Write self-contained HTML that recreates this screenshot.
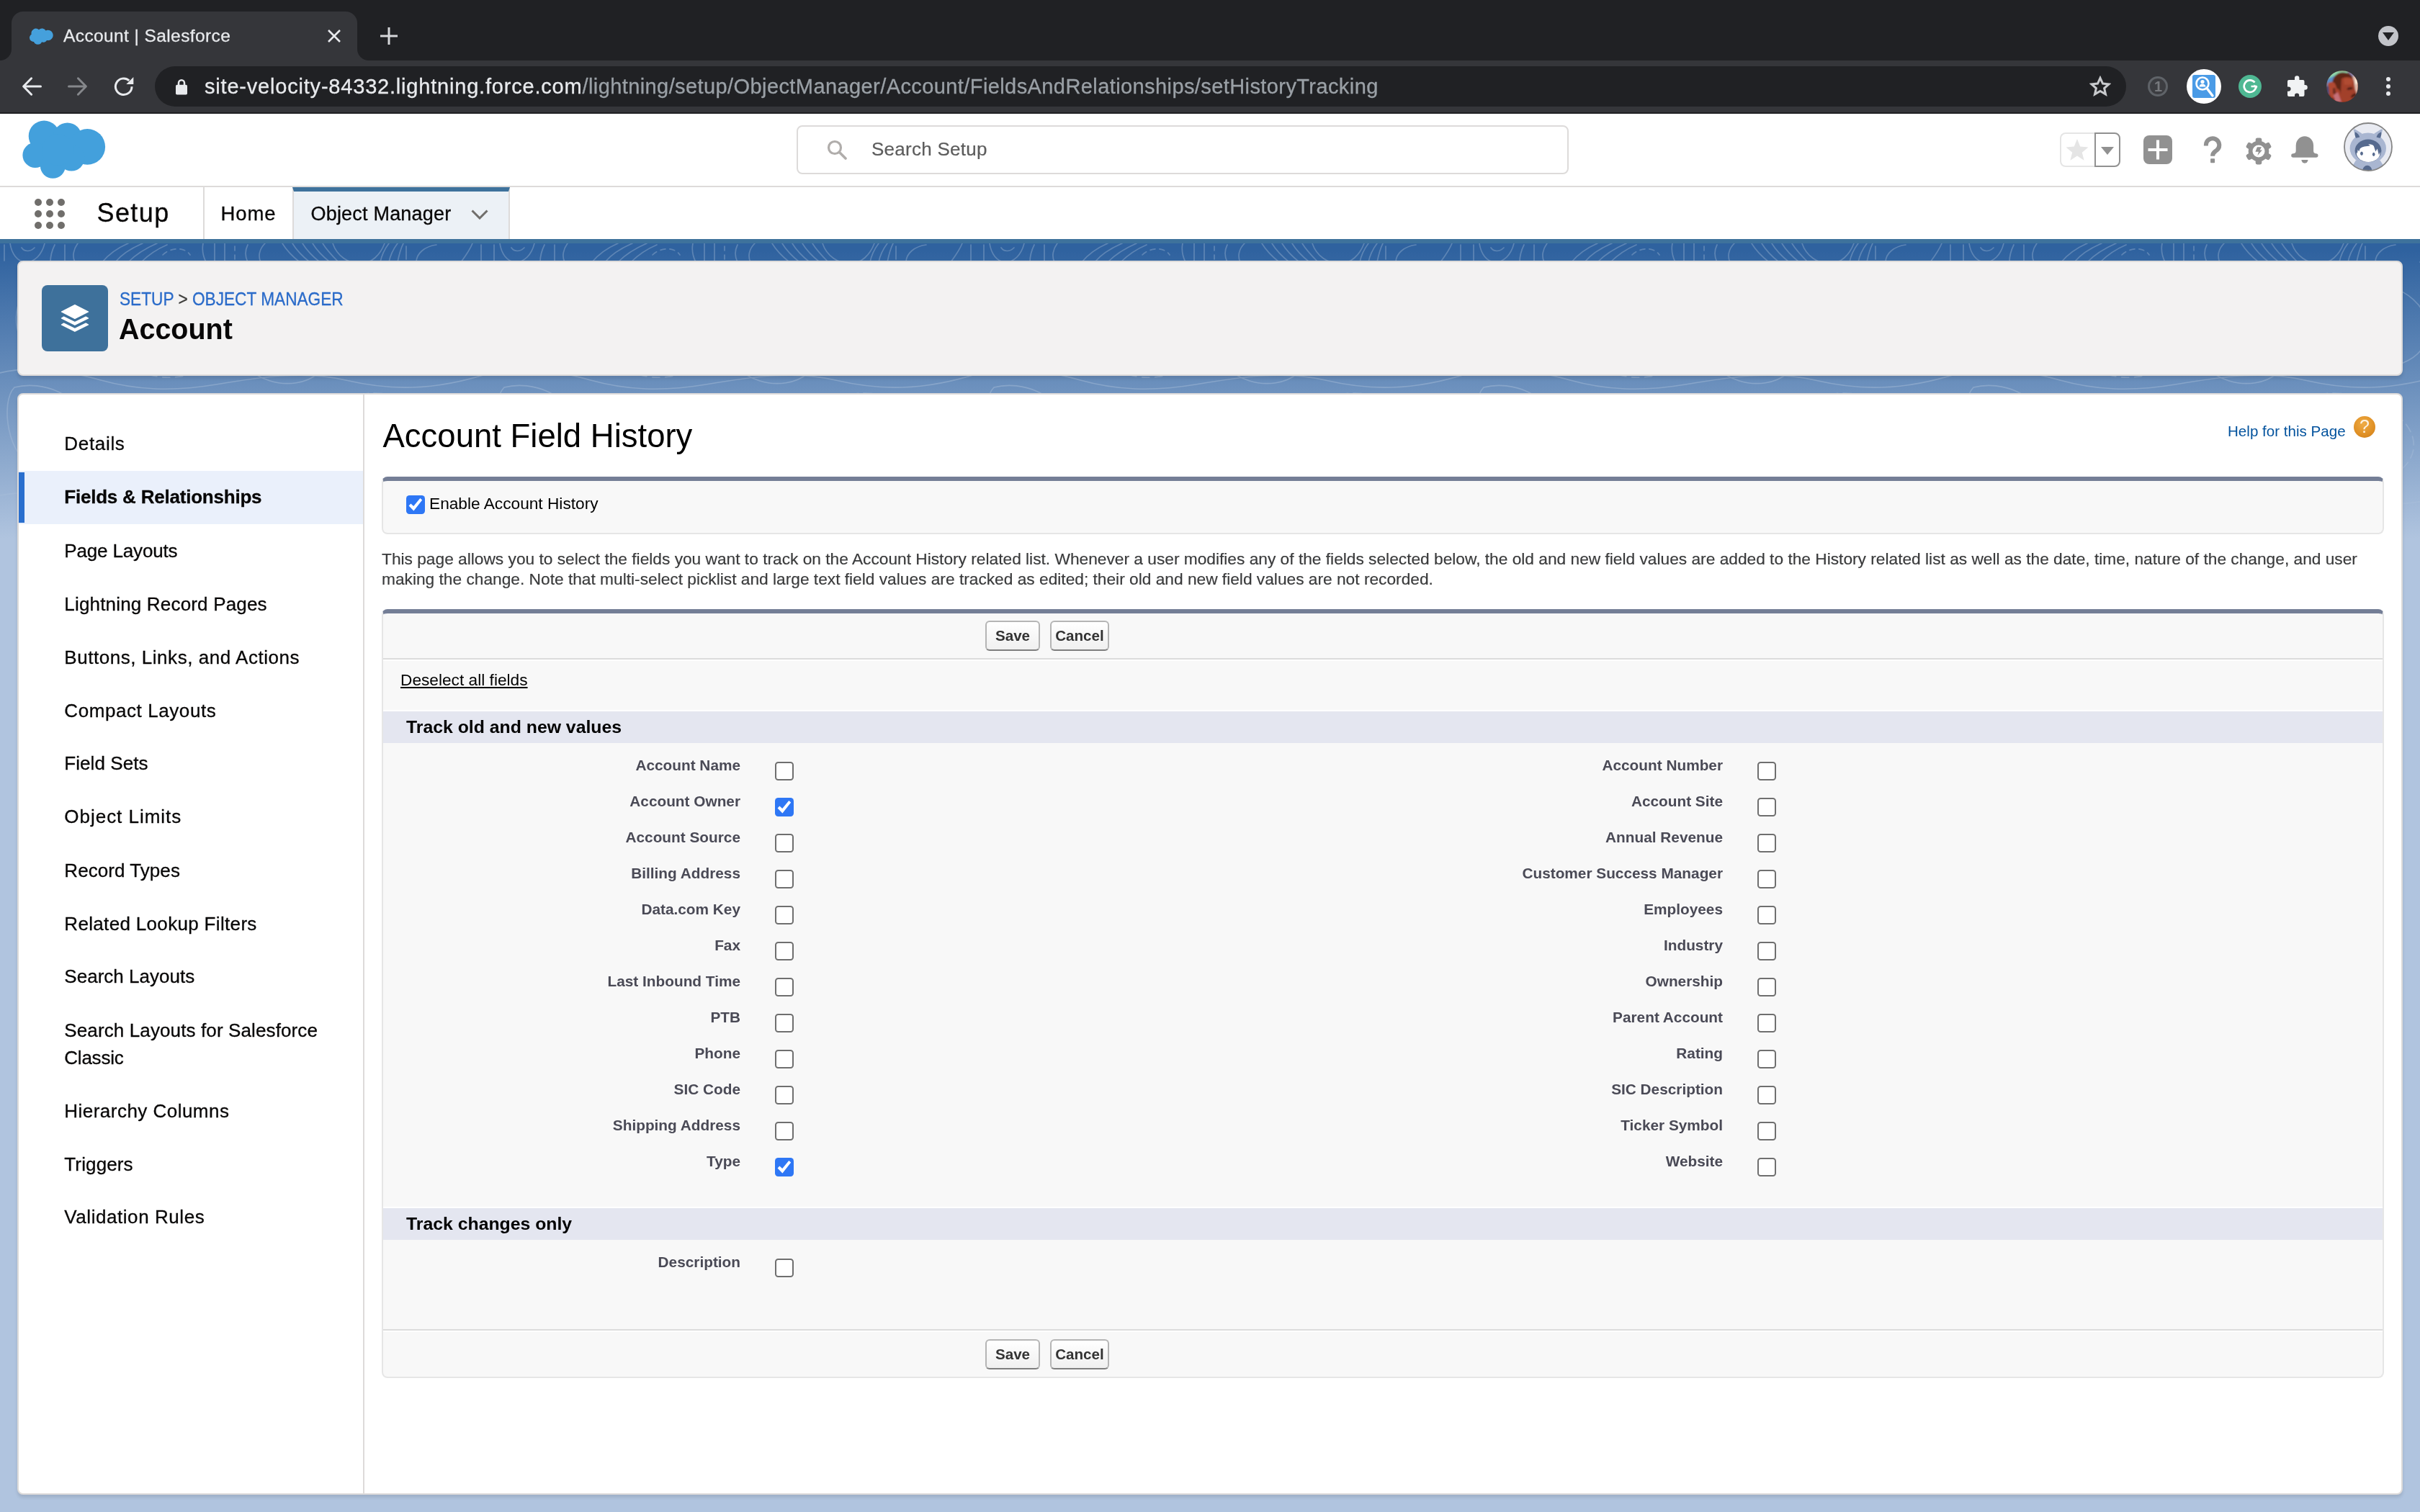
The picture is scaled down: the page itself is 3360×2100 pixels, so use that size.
<!DOCTYPE html>
<html lang="en">
<head>
<meta charset="utf-8">
<title>Account | Salesforce</title>
<style>
*{box-sizing:border-box;margin:0;padding:0}
html,body{width:3360px;height:2100px;overflow:hidden;background:#b0c4df}
body{position:relative;font-family:"Liberation Sans",Arial,Helvetica,sans-serif;color:#000;-webkit-font-smoothing:antialiased}
.abs{position:absolute}
.t{position:absolute;white-space:nowrap;line-height:1}
/* ---------- chrome ---------- */
#tabstrip{left:0;top:0;width:3360px;height:84px;background:#202124}
#toolbar{left:0;top:84px;width:3360px;height:74px;background:#35363a;border-bottom:2px solid #1f2023}
#tab{left:16px;top:16px;width:480px;height:68px;background:#35363a;border-radius:16px 16px 0 0}
#tab:before,#tab:after{content:"";position:absolute;bottom:0;width:16px;height:16px;background:radial-gradient(circle at 0 0,rgba(0,0,0,0) 15.5px,#35363a 16.5px)}
#tab:before{left:-16px}
#tab:after{right:-16px;background:radial-gradient(circle at 100% 0,rgba(0,0,0,0) 15.5px,#35363a 16.5px)}
#omni{left:215px;top:92px;width:2737px;height:56px;border-radius:28px;background:#202124}
/* ---------- sf header ---------- */
#hdr{left:0;top:158px;width:3360px;height:100px;background:#fff}
#nav{left:0;top:258px;width:3360px;height:80px;background:#fff;border-top:2px solid #dddbda;border-bottom:6px solid #3e729c}
#bg{left:0;top:338px;width:3360px;height:1762px;background:linear-gradient(#2f629f 0,#2f629f 10px,#b0c4df 410px,#b0c4df 100%)}
#search{left:1106px;top:174px;width:1072px;height:68px;border:2px solid #dddbda;border-radius:8px;background:#fff}
/* ---------- cards ---------- */
#ph{left:24px;top:362px;width:3312px;height:160px;background:#f3f2f2;border:2px solid #dddbda;border-radius:8px;box-shadow:0 4px 4px rgba(0,0,0,.1)}
#main{left:24px;top:546px;width:3312px;height:1530px;background:#fff;border:2px solid #dddbda;border-radius:8px;box-shadow:0 4px 4px rgba(0,0,0,.1)}
#sidediv{left:504px;top:548px;width:2px;height:1526px;background:#dddbda}
.nv{position:absolute;left:89.300px;-webkit-text-stroke:.3px;white-space:nowrap;font-size:26px;line-height:39px;color:#080707;letter-spacing:.4px}
/* ---------- classic content ---------- */
.pb{position:absolute;background:#f8f8f8;border:2px solid #e6e6e6;border-top:6px solid #747e96;border-radius:8px}
.sec{position:absolute;left:532px;width:2775.500px;height:44px;background:#e4e6f0;box-shadow:0 -2px 0 #fff}
.sec span{position:absolute;left:32px;top:7.5px;font-weight:bold;font-size:24.8px;line-height:28px;white-space:nowrap}
.lb{position:absolute;text-align:right;font-weight:bold;font-size:20.8px;line-height:24px;margin-top:-1px;color:#4a4a56;white-space:nowrap}
.cb{position:absolute;width:26px;height:26px;border:2px solid #6f6f6f;border-radius:4.500px;background:#fff}
.cb.on{border:0;background:#2e77f5}
.cb.on:after{content:"";position:absolute;left:0;top:0;width:26px;height:26px;background:#fff;clip-path:polygon(3.600px 14.500px,6.400px 11.600px,10.200px 15.100px,19.300px 3.900px,22.200px 6.500px,10.400px 21.500px)}
.btn{position:absolute;height:42px;border:2px solid #b5b5b5;border-bottom-color:#7f7f7f;border-radius:6px;background:linear-gradient(#fff,#f0f0f0);font-weight:bold;font-size:20.6px;line-height:38px;text-align:center;color:#333}
</style>
</head>
<body>
<div id="root" style="position:absolute;left:0;top:0;width:3360px;height:2100px;overflow:hidden;will-change:transform">
<!-- CHROME -->
<div id="tabstrip" class="abs"></div>
<div id="toolbar" class="abs"></div>
<div id="tab" class="abs"></div>
<div id="omni" class="abs"></div>

<!-- tab content -->
<svg class="abs" style="left:40px;top:38px" width="34" height="24" viewBox="0 0 34 24"><path fill="#45a0dc" d="M14 3.2a6.2 6.2 0 0 1 9.6 1.2 7 7 0 0 1 2.9-.6c4 0 7.2 3.2 7.200 7.200s-3.200 7.200-7.200 7.200c-.5 0-1-.05-1.450-.15a5.300 5.300 0 0 1-6.950 2.150 6 6 0 0 1-11.100-.300A5.500 5.500 0 0 1 1 14.500c0-2 1.100-3.800 2.700-4.750A6.400 6.400 0 0 1 14 3.200z"/></svg>
<div class="t" style="left:88px;top:38px;font-size:24.500px;color:#e8eaed;letter-spacing:.4px;-webkit-text-stroke:.3px">Account | Salesforce</div>
<svg class="abs" style="left:454px;top:40px" width="20" height="20" viewBox="0 0 20 20"><path d="M2 2L18 18M18 2L2 18" stroke="#e8eaed" stroke-width="2.600" fill="none"/></svg>
<svg class="abs" style="left:528px;top:38px" width="24" height="24" viewBox="0 0 24 24"><path d="M12 0V24M0 12H24" stroke="#d5d7da" stroke-width="3" fill="none"/></svg>
<div class="abs" style="left:3302px;top:36px;width:28px;height:28px;border-radius:14px;background:#c2c4c9"></div>
<svg class="abs" style="left:3308px;top:45px" width="16" height="12" viewBox="0 0 16 12"><path d="M0 0H16L8 11z" fill="#202124"/></svg>
<!-- toolbar icons -->
<svg class="abs" style="left:30px;top:105.500px" width="28" height="28" viewBox="0 0 28 28"><path d="M26.500 14H3.500M13.600 2.800L2.600 14l11 11.200" stroke="#e8eaed" stroke-width="3" fill="none" stroke-linecap="round" stroke-linejoin="round"/></svg>
<svg class="abs" style="left:94px;top:105.500px" width="28" height="28" viewBox="0 0 28 28"><path d="M1.500 14H24.500M14.400 2.800L25.400 14l-11 11.200" stroke="#85878b" stroke-width="3" fill="none" stroke-linecap="round" stroke-linejoin="round"/></svg>
<svg class="abs" style="left:157px;top:105px" width="30" height="30" viewBox="0 0 30 30"><path d="M26 15.200A11.300 11.300 0 1 1 22.300 6.900" stroke="#e8eaed" stroke-width="3" fill="none"/><path d="M28.300 2V12H18.300z" fill="#e8eaed"/></svg>
<svg class="abs" style="left:243px;top:108.500px" width="18" height="24" viewBox="0 0 18 24"><rect x="1" y="8.800" width="16" height="13.700" rx="1.800" fill="#e8eaed"/><path d="M5 9.500V6.300a4 4 0 0 1 8 0V9.500" stroke="#e8eaed" stroke-width="2.500" fill="none"/></svg>
<div class="t" style="left:284px;top:106px;font-size:29px;color:#e8eaed;letter-spacing:.8px;-webkit-text-stroke:.3px">site-velocity-84332.lightning.force.com<span style="color:#9aa0a6;letter-spacing:.41px">/lightning/setup/ObjectManager/Account/FieldsAndRelationships/setHistoryTracking</span></div>
<svg class="abs" style="left:2901px;top:105px" width="30" height="30" viewBox="0 0 32 32"><path d="M16 3.500l3.800 8.300 9 .9-6.800 6 2 8.900L16 23l-8 4.600 2-8.900-6.800-6 9-.9z" stroke="#c8cacd" stroke-width="3.200" fill="none" stroke-linejoin="miter"/></svg>
<div class="abs" style="left:2982px;top:106px;width:28px;height:28px;border-radius:14px;border:3px solid #5f6368;background:#3c3d41"></div>
<div class="t" style="left:2991px;top:110px;font-size:20px;font-weight:bold;color:#77797d">1</div>
<div class="abs" style="left:3036px;top:96px;width:48px;height:48px;border-radius:24px;background:#fff"></div>
<div class="abs" style="left:3044px;top:104px;width:32px;height:32px;border-radius:3px;background:#4a9be6"></div>
<svg class="abs" style="left:3044px;top:104px" width="32" height="32" viewBox="0 0 32 32"><circle cx="14" cy="12" r="8.500" stroke="#fff" stroke-width="2.600" fill="none"/><path d="M20 18.500L28 29" stroke="#fff" stroke-width="3.400" stroke-linecap="round"/><circle cx="14" cy="9.500" r="2.600" fill="#fff"/><path d="M9.500 16.500a4.500 4 0 0 1 9 0z" fill="#fff"/></svg>
<div class="abs" style="left:3108px;top:104px;width:32px;height:32px;border-radius:16px;background:#4fb893"></div>
<svg class="abs" style="left:3108px;top:104px" width="32" height="32" viewBox="0 0 32 32"><path d="M22.500 10.500A8.300 8.300 0 1 0 24.300 16H17.500" stroke="#fff" stroke-width="2.600" fill="none"/><path d="M21 13.500l5.500 2.500-2 4z" fill="#fff"/></svg>
<svg class="abs" style="left:3174px;top:105px" width="30" height="30" viewBox="0 0 30 30"><path fill="#f1f3f4" d="M12 3.500a3.200 3.200 0 0 1 6.400 0V6h5.100a2 2 0 0 1 2 2v5.100h1a3.300 3.300 0 0 1 0 6.600h-1V27a2 2 0 0 1-2 2h-5.300v-1.500a3.100 3.100 0 0 0-6.200 0V29H4a2 2 0 0 1-2-2v-5.300h1.500a3.100 3.100 0 0 0 0-6.200H2V8a2 2 0 0 1 2-2h8z"/></svg>
<svg class="abs" style="left:3230px;top:98px" width="44" height="44" viewBox="0 0 44 44"><defs><clipPath id="avc"><circle cx="22" cy="22" r="22"/></clipPath><filter id="avb" x="-10%" y="-10%" width="120%" height="120%"><feGaussianBlur stdDeviation=".9"/></filter></defs><g clip-path="url(#avc)"><rect width="44" height="44" fill="#7a2c1f"/><g filter="url(#avb)"><path d="M0 0H30V6L8 22 0 24z" fill="#8fd8ac"/><path d="M0 12L14 6 12 16 0 22z" fill="#5a8ec8"/><path d="M28 0H44V14L36 8z" fill="#8a90c0"/><path d="M36 8L44 6V36L40 30 38 16z" fill="#e2c3b4"/><path d="M40 12l4-1v8l-4-1z" fill="#fff3e0"/><path d="M8 22C7 10 14 2.500 23 2.500c7 0 12 3 14 8L30 10 21 12 20 30 12 25z" fill="#5e2519"/><path d="M21 11C27 8 35 9 38 13L40 26 42 31 40 34 41 38 34 44H18L20 30z" fill="#a2412a"/><path d="M24 11c5-2 10-1 13 2l-1 6-11 1z" fill="#b04c30"/><path d="M28.500 25.500C31 23 34 22.500 36.500 23.500L36 26 29 27z" fill="#4a1d15"/><path d="M34 36c2-3 5-4.500 7.500-4.500L41 34 35 38z" fill="#3a1510"/><path d="M2 18c3-3 8-3 10 0l3 8-2 12-6 0C3 32 1 24 2 18z" fill="#b14a30"/><path d="M9 25c2-2 4-1 4 2l0 6c-2 1-4-1-4-3z" fill="#6a2a20"/><path d="M12 26c3-2 6 0 7 3l1 8-5 1z" fill="#a9432c"/><path d="M10 34l6-4 5 14H12z" fill="#c56f78"/><path d="M0 22l3-1 1 12-4 2z" fill="#3b4a7a"/></g></g></svg>
<div class="abs" style="left:3313px;top:107px;width:6px;height:6px;border-radius:3px;background:#e8eaed;box-shadow:0 10px 0 #e8eaed,0 20px 0 #e8eaed"></div>

<!-- SF -->
<div id="hdr" class="abs"></div>
<div id="nav" class="abs"></div>
<div id="bg" class="abs"></div>
<svg class="abs" style="left:0;top:338px" width="3360" height="420" viewBox="0 0 3360 420">
<defs>
<pattern id="lp" x="0" y="0" width="680" height="420" patternUnits="userSpaceOnUse">
<g fill="none" stroke="#fff" stroke-width="1.700" stroke-linecap="round">
<path d="M6 2V24M14 0C16 14 24 26 36 26S58 16 62 0M30 6C34 12 42 12 48 6M76 2C72 10 70 18 70 26M90 2V26M108 0C102 8 100 18 104 26"/>
<path d="M142 26C152 14 164 6 178 0M160 26C170 14 184 6 198 0M178 26C190 14 204 6 218 0M196 26C206 16 218 8 232 2"/>
<path d="M226 16C236 6 256 4 264 16" stroke-dasharray="7 6"/>
<path d="M282 0C280 10 282 18 286 26M298 0V26M312 0V26M326 4V10M326 16V22M344 2C340 10 340 18 344 26M368 0C360 8 358 18 362 26"/>
<path d="M392 0C398 10 406 18 416 26M406 0C412 10 420 18 430 26M420 0C426 10 434 18 444 26M434 0C440 10 448 18 458 26M448 0C454 10 462 18 470 26"/>
<path d="M462 0C468 18 484 28 500 28S528 16 534 0M528 26C530 16 534 8 540 0M540 26C542 16 546 8 552 0M552 26C554 16 556 8 560 0M564 4V22M578 26C578 14 590 4 606 2M640 26C646 18 652 10 656 0M668 2V26"/>
<path d="M40 60C70 40 120 50 130 90S100 170 60 160 10 90 40 60ZM70 84C86 74 104 82 104 100S84 130 68 122 54 94 70 84Z"/>
<path d="M180 70C230 50 300 70 310 120S250 200 200 180 130 100 180 70Z" stroke-dasharray="10 8"/>
<path d="M360 50C420 60 470 100 460 150S380 210 340 170 320 60 360 50ZM380 100C410 100 430 120 420 146S376 160 366 140 360 104 380 100Z"/>
<path d="M520 60C560 40 640 60 650 110S600 180 560 170 480 90 520 60Z"/>
<path d="M20 200C60 190 110 210 120 250S90 320 50 310 0 220 20 200ZM160 230C200 220 260 240 270 280S240 340 200 335 130 250 160 230Z"/>
<path d="M320 230C370 215 430 235 440 275S400 345 360 335 290 250 320 230ZM500 210C550 200 620 230 630 270S590 340 540 330 460 230 500 210Z" stroke-dasharray="12 7"/>
<path d="M0 180C40 170 90 176 140 190S240 206 300 196 420 176 480 190 600 206 680 180M0 350C60 340 120 350 180 360S300 370 360 356 480 340 540 352 620 366 680 350"/>
</g>
</pattern>
<linearGradient id="lf" x1="0" y1="0" x2="0" y2="1"><stop offset="0" stop-color="#fff" stop-opacity=".22"/><stop offset=".45" stop-color="#fff" stop-opacity=".2"/><stop offset="1" stop-color="#fff" stop-opacity="0"/></linearGradient>
<mask id="lm"><rect width="3360" height="420" fill="url(#lf)"/></mask>
</defs>
<rect width="3360" height="420" fill="url(#lp)" mask="url(#lm)"/>
</svg>
<div id="search" class="abs"></div>

<!-- sf header -->
<svg class="abs" style="left:30px;top:166px" width="118" height="84" viewBox="30 166 118 84"><g fill="#43a0dc"><circle cx="61.200" cy="189" r="21.500"/><circle cx="93.600" cy="190.300" r="19.800"/><circle cx="121.300" cy="203.900" r="24.800"/><circle cx="48.900" cy="215.500" r="17.500"/><circle cx="73.400" cy="230.300" r="17.500"/><circle cx="99.200" cy="219.400" r="18.200"/><circle cx="80" cy="208" r="22"/></g></svg>
<svg class="abs" style="left:1148px;top:194px" width="28" height="28" viewBox="0 0 28 28"><circle cx="11" cy="11" r="8.500" stroke="#b0adab" stroke-width="3.200" fill="none"/><path d="M17.500 17.500L26 26" stroke="#b0adab" stroke-width="3.600" stroke-linecap="round"/></svg>
<div class="t" style="left:1210px;top:192px;font-size:26px;color:#5c5c5c;line-height:30px;letter-spacing:.27px;-webkit-text-stroke:.2px">Search Setup</div>
<!-- right icons -->
<div class="abs" style="left:2860px;top:184px;width:50px;height:48px;border:2px solid #e5e5e5;border-right:0;border-radius:8px 0 0 8px;background:#fff"></div>
<svg class="abs" style="left:2868px;top:193px" width="32" height="30" viewBox="0 0 32 30"><path fill="#e5e5e5" d="M16 0l4.200 10.600 11.300.8-8.700 7.300 2.800 11L16 23.600 6.400 29.700l2.800-11L.5 11.400l11.300-.8z"/></svg>
<div class="abs" style="left:2908px;top:184px;width:36px;height:48px;border:2px solid #919191;border-radius:0 8px 8px 0;background:#fff"></div>
<svg class="abs" style="left:2917px;top:204px" width="18" height="11" viewBox="0 0 18 11"><path d="M0 0H18L9 11z" fill="#919191"/></svg>
<div class="abs" style="left:2976px;top:188px;width:40px;height:40px;border-radius:8px;background:#919191"></div>
<svg class="abs" style="left:2976px;top:188px" width="40" height="40" viewBox="0 0 40 40"><path d="M20 6.500V33.500M6.500 20H33.500" stroke="#fff" stroke-width="4.100" fill="none"/></svg>
<svg class="abs" style="left:3058px;top:188px" width="28" height="40" viewBox="0 0 28 40"><path d="M4.870 14.500V13.450A9.200 9.200 0 1 1 19.600 20.800C17 23 14.070 23.800 14.070 28.700" stroke="#919191" stroke-width="6" fill="none"/><rect x="11.100" y="32.200" width="6" height="6" rx=".8" fill="#919191"/></svg>
<svg class="abs" style="left:3117.900px;top:190.900px" width="36" height="38" viewBox="-18 -19 36 38"><g fill="#919191"><circle r="14.300"/><g id="gt"><path d="M-4.300-13V-16.200A2.600 2.600 0 0 1-1.700-18.600H1.700A2.600 2.600 0 0 1 4.300-16.200V-13z"/></g><use href="#gt" transform="rotate(60)"/><use href="#gt" transform="rotate(120)"/><use href="#gt" transform="rotate(180)"/><use href="#gt" transform="rotate(240)"/><use href="#gt" transform="rotate(300)"/></g><circle r="8.500" fill="#fff"/><path d="M-2.070-5.800H3.970L1.650-1.400H4.960L-1.650 6 0 .83H-4.550z" fill="#919191"/></svg>
<svg class="abs" style="left:3181px;top:189px" width="38" height="38" viewBox="0 0 38 38"><g fill="#919191"><path d="M6.700 13A12.200 12.800 0 0 1 31.100 13V20.500C31.100 23 32.500 24.200 34.700 24.200A2.800 2.800 0 0 1 34.700 29.800H3A2.800 2.800 0 0 1 3 24.200C5.300 24.200 6.700 23 6.700 20.500z"/><path d="M14.400 32.900H23.500A4.550 4.800 0 0 1 14.400 32.900z"/></g></svg>
<svg class="abs" style="left:3254px;top:170px" width="68" height="68" viewBox="0 0 68 68"><defs><clipPath id="asc"><circle cx="34" cy="34" r="33"/></clipPath></defs><circle cx="34" cy="34" r="33" fill="#e9ebf2"/><g clip-path="url(#asc)"><g fill="#a9b6d1"><path d="M14 11.500C13.200 9.800 14.600 9 16.200 9.800L25.500 15.500 17 23z"/><path d="M53.800 11.500C54.600 9.800 53.200 9 51.600 9.800L42.300 15.500 50.800 23z"/><ellipse cx="33.800" cy="36" rx="25.200" ry="21.500"/><path d="M17 52.500L50.500 52.500 60 68H8z"/></g><g fill="#566a8e"><path d="M15.800 13.200C19 14.500 21.500 17.500 22.300 20.500L17.200 21.800C15.500 19 15.200 15.500 15.800 13.200z"/><path d="M52 13.200C48.800 14.500 46.300 17.500 45.500 20.500L50.600 21.800C52.300 19 52.600 15.500 52 13.200z"/><ellipse cx="34" cy="39.300" rx="18.400" ry="15.800"/><ellipse cx="32.800" cy="67" rx="6.600" ry="7.200"/></g><ellipse cx="34.200" cy="42.600" rx="16.400" ry="12.300" fill="#fff"/><path fill="#566a8e" d="M17.200 40C18 30 26 24.500 35 24.500 44 24.500 51 30.500 51.300 40L48.800 45 46.800 36.500 44.300 40.500 41.800 32.800C40 31 37 29 32.500 28.600L36.800 32.600C31 33 26 33.800 22.800 36.200L21.200 40.500 19.800 37.800 18.800 43.500z"/><ellipse cx="25" cy="43.200" rx="1.900" ry="2.700" fill="#566a8e"/><ellipse cx="41.700" cy="44.300" rx="1.800" ry="2.600" fill="#566a8e"/></g><circle cx="34" cy="34" r="33" fill="none" stroke="#858585" stroke-width="1.800"/></svg>
<!-- nav -->
<div class="abs" style="left:48px;top:276px;width:10px;height:10px;border-radius:5px;background:#706e6b;box-shadow:16px 0 0 #706e6b,32px 0 0 #706e6b,0 16px 0 #706e6b,16px 16px 0 #706e6b,32px 16px 0 #706e6b,0 32px 0 #706e6b,16px 32px 0 #706e6b,32px 32px 0 #706e6b"></div>
<div class="t" style="left:134.500px;top:275px;font-size:36px;line-height:42px;color:#080707;letter-spacing:1.400px;-webkit-text-stroke:.3px">Setup</div>
<div class="abs" style="left:282px;top:260px;width:2px;height:72px;background:#dddbda"></div>
<div class="t" style="left:306.500px;top:281px;font-size:27.500px;line-height:32px;color:#080707;letter-spacing:.9px;-webkit-text-stroke:.3px">Home</div>
<div class="abs" style="left:406px;top:260px;width:302px;height:72px;background:#ecf1f6;border-top:6px solid #3e729c;border-left:2px solid #dddbda;border-right:2px solid #dddbda"></div>
<div class="t" style="left:431.500px;top:281px;font-size:27px;line-height:32px;color:#080707;letter-spacing:.2px;-webkit-text-stroke:.3px">Object Manager</div>
<svg class="abs" style="left:654px;top:291px" width="24" height="14" viewBox="0 0 24 14"><path d="M1.500 1.500L12 12 22.500 1.500" stroke="#706e6b" stroke-width="3" fill="none"/></svg>

<div id="ph" class="abs"></div>
<div id="main" class="abs"></div>
<div id="sidediv" class="abs"></div>

<!-- page header -->
<div class="abs" style="left:58px;top:396px;width:92px;height:92px;border-radius:8px;background:#3e719b"></div>
<svg class="abs" style="left:84px;top:422px" width="40" height="40" viewBox="-.8 -1 40 40"><g fill="#fff" stroke="#fff" stroke-width="1.200" stroke-linejoin="round"><path d="M.6 10L19.100.6 37.800 10 19.100 19.400z"/><path d="M.6 18.900L3.800 17 19.100 24.600 34.400 17 37.800 18.900 19.100 28.300z"/><path d="M.6 27.900L3.800 26 19.100 33.600 34.400 26 37.800 27.900 19.100 37.300z"/></g></svg>
<div class="t" style="left:165.500px;top:399px;font-size:25px;line-height:32px;color:#2a6bc9;transform-origin:0 0;transform:scaleX(.906);-webkit-text-stroke:.3px">SETUP <span style="color:#3e3e3c">&gt;</span> OBJECT MANAGER</div>
<div class="t" style="left:165px;top:432.500px;font-size:40.500px;line-height:48px;font-weight:bold;color:#080707;transform-origin:0 0;transform:scaleX(.974)">Account</div>
<!-- sidebar -->
<div class="abs" style="left:26px;top:654px;width:478px;height:74px;background:#eaf0fb"></div>
<div class="abs" style="left:26px;top:656px;width:8px;height:70px;background:#2a6fce"></div>
<div class="nv" style="top:597.2px;letter-spacing:0.68px">Details</div>
<div class="nv" style="top:670.9px;letter-spacing:-0.22px;font-weight:bold">Fields &amp; Relationships</div>
<div class="nv" style="top:745.6px;letter-spacing:-0.16px">Page Layouts</div>
<div class="nv" style="top:819.9px;letter-spacing:0.18px">Lightning Record Pages</div>
<div class="nv" style="top:893.9px;letter-spacing:0.54px">Buttons, Links, and Actions</div>
<div class="nv" style="top:967.8px;letter-spacing:0.58px">Compact Layouts</div>
<div class="nv" style="top:1041.4px;letter-spacing:0.06px">Field Sets</div>
<div class="nv" style="top:1115.3px;letter-spacing:0.98px">Object Limits</div>
<div class="nv" style="top:1189.6px;letter-spacing:0.06px">Record Types</div>
<div class="nv" style="top:1263.5px;letter-spacing:0.33px">Related Lookup Filters</div>
<div class="nv" style="top:1336.8px;letter-spacing:0.03px">Search Layouts</div>
<div class="nv" style="top:1411.9px;letter-spacing:0.12px">Search Layouts for Salesforce</div>
<div class="nv" style="top:1449.5px;letter-spacing:-0.23px">Classic</div>
<div class="nv" style="top:1523.8px;letter-spacing:0.47px">Hierarchy Columns</div>
<div class="nv" style="top:1597.6px;letter-spacing:0.13px">Triggers</div>
<div class="nv" style="top:1671.4px;letter-spacing:0.56px">Validation Rules</div>
<!-- CONTENT -->
<div class="t" style="left:531.500px;top:579.500px;font-size:45.500px;line-height:52px;color:#000">Account Field History</div>
<div class="t" style="left:3093px;top:586px;font-size:20.600px;line-height:26px;color:#02529d">Help for this Page</div>
<div class="abs" style="left:3268px;top:578px;width:30px;height:30px;border-radius:15px;background:radial-gradient(circle at 45% 35%,#efac45,#de8d22 65%,#c0761a)"></div><div class="t" style="left:3276px;top:580px;font-size:25px;color:#fdf3e2">?</div>
<div class="pb" style="left:530px;top:662px;width:2779.500px;height:80px"></div>
<div class="cb on" style="left:564px;top:688px"></div>
<div class="t" style="left:596px;top:685.500px;font-size:22.700px;line-height:26px;color:#000">Enable Account History</div>
<div class="abs" style="left:530px;top:762px;width:2800px;font-size:22.730px;line-height:28px;color:#3a3b3c;-webkit-text-stroke:.2px">This page allows you to select the fields you want to track on the Account History related list. Whenever a user modifies any of the fields selected below, the old and new field values are added to the History related list as well as the date, time, nature of the change, and user making the change. Note that multi-select picklist and large text field values are tracked as edited; their old and new field values are not recorded.</div>
<div class="pb" style="left:530px;top:846px;width:2779.500px;height:1068px"></div>
<div class="abs" style="left:532px;top:914px;width:2775.500px;height:2px;background:#dcdcdc;box-shadow:0 2px 0 #fff"></div>
<div class="abs" style="left:532px;top:1846px;width:2775.500px;height:2px;background:#dcdcdc;box-shadow:0 2px 0 #fff"></div>
<div class="btn" style="left:1368px;top:862px;width:76px">Save</div><div class="btn" style="left:1458px;top:862px;width:82px">Cancel</div>
<div class="btn" style="left:1368px;top:1860px;width:76px">Save</div><div class="btn" style="left:1458px;top:1860px;width:82px">Cancel</div>
<div class="t" style="left:556px;top:931px;font-size:22.700px;line-height:26px;color:#000;text-decoration:underline">Deselect all fields</div>
<div class="sec" style="top:988px"><span>Track old and new values</span></div>
<div class="sec" style="top:1678px"><span>Track changes only</span></div>
<div class="lb" style="left:628px;width:400px;top:1052px">Account Name</div><div class="cb" style="left:1076px;top:1058px"></div><div class="lb" style="left:1992px;width:400px;top:1052px">Account Number</div><div class="cb" style="left:2440px;top:1058px"></div>
<div class="lb" style="left:628px;width:400px;top:1102px">Account Owner</div><div class="cb on" style="left:1076px;top:1108px"></div><div class="lb" style="left:1992px;width:400px;top:1102px">Account Site</div><div class="cb" style="left:2440px;top:1108px"></div>
<div class="lb" style="left:628px;width:400px;top:1152px">Account Source</div><div class="cb" style="left:1076px;top:1158px"></div><div class="lb" style="left:1992px;width:400px;top:1152px">Annual Revenue</div><div class="cb" style="left:2440px;top:1158px"></div>
<div class="lb" style="left:628px;width:400px;top:1202px">Billing Address</div><div class="cb" style="left:1076px;top:1208px"></div><div class="lb" style="left:1992px;width:400px;top:1202px">Customer Success Manager</div><div class="cb" style="left:2440px;top:1208px"></div>
<div class="lb" style="left:628px;width:400px;top:1252px">Data.com Key</div><div class="cb" style="left:1076px;top:1258px"></div><div class="lb" style="left:1992px;width:400px;top:1252px">Employees</div><div class="cb" style="left:2440px;top:1258px"></div>
<div class="lb" style="left:628px;width:400px;top:1302px">Fax</div><div class="cb" style="left:1076px;top:1308px"></div><div class="lb" style="left:1992px;width:400px;top:1302px">Industry</div><div class="cb" style="left:2440px;top:1308px"></div>
<div class="lb" style="left:628px;width:400px;top:1352px">Last Inbound Time</div><div class="cb" style="left:1076px;top:1358px"></div><div class="lb" style="left:1992px;width:400px;top:1352px">Ownership</div><div class="cb" style="left:2440px;top:1358px"></div>
<div class="lb" style="left:628px;width:400px;top:1402px">PTB</div><div class="cb" style="left:1076px;top:1408px"></div><div class="lb" style="left:1992px;width:400px;top:1402px">Parent Account</div><div class="cb" style="left:2440px;top:1408px"></div>
<div class="lb" style="left:628px;width:400px;top:1452px">Phone</div><div class="cb" style="left:1076px;top:1458px"></div><div class="lb" style="left:1992px;width:400px;top:1452px">Rating</div><div class="cb" style="left:2440px;top:1458px"></div>
<div class="lb" style="left:628px;width:400px;top:1502px">SIC Code</div><div class="cb" style="left:1076px;top:1508px"></div><div class="lb" style="left:1992px;width:400px;top:1502px">SIC Description</div><div class="cb" style="left:2440px;top:1508px"></div>
<div class="lb" style="left:628px;width:400px;top:1552px">Shipping Address</div><div class="cb" style="left:1076px;top:1558px"></div><div class="lb" style="left:1992px;width:400px;top:1552px">Ticker Symbol</div><div class="cb" style="left:2440px;top:1558px"></div>
<div class="lb" style="left:628px;width:400px;top:1602px">Type</div><div class="cb on" style="left:1076px;top:1608px"></div><div class="lb" style="left:1992px;width:400px;top:1602px">Website</div><div class="cb" style="left:2440px;top:1608px"></div>
<div class="lb" style="left:628px;width:400px;top:1742px">Description</div><div class="cb" style="left:1076px;top:1748px"></div>

</div>
</body>
</html>
